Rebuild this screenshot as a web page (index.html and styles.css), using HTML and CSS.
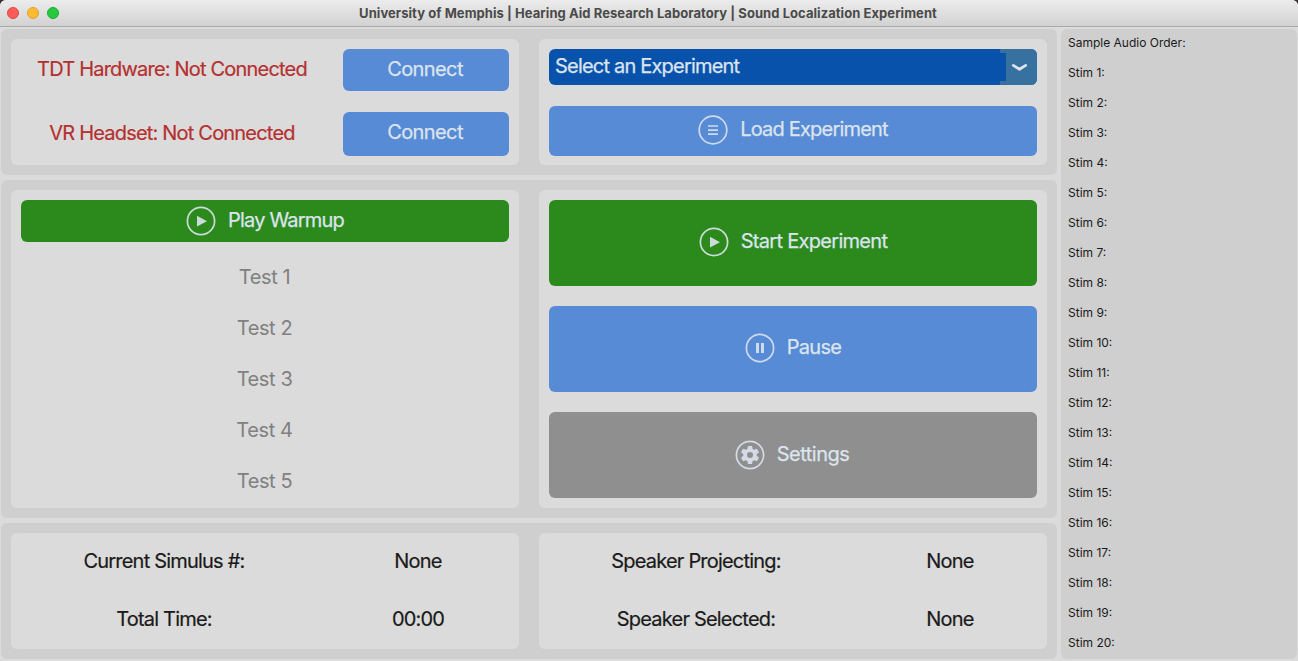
FILE: index.html
```html
<!DOCTYPE html>
<html lang="en">
<head>
<meta charset="utf-8">
<title>Sound Localization Experiment</title>
<link rel="stylesheet" href="styles.css">
</head>
<body>
<div class="window">
  <header class="titlebar">
    <div class="lights"><span class="light red"></span><span class="light yellow"></span><span class="light green"></span></div>
    <h1 class="title"><span>University of Memphis | Hearing Aid Research Laboratory | Sound Localization Experiment</span></h1>
  </header>
  <div class="content">
    <main class="main">
      <section class="section setup">
        <div class="panel connections">
          <span class="status">TDT Hardware: Not Connected</span>
          <button class="btn blue connect">Connect</button>
          <span class="status vr">VR Headset: Not Connected</span>
          <button class="btn blue connect second">Connect</button>
        </div>
        <div class="panel loader">
          <div class="select"><span class="select-text">Select an Experiment</span>
            <svg class="arrow" width="37" height="36" viewBox="0 0 37 36"><path d="M0 0H37V36H0V32H6V4H0Z" fill="#36719f"/><path d="M13.3 16.4L19.5 20.3L25.7 16.4" fill="none" stroke="#dce4ee" stroke-width="2.8" stroke-linecap="round" stroke-linejoin="round"/></svg>
          </div>
          <button class="btn blue load">
            <svg class="icon" viewBox="0 0 30 30"><circle cx="15" cy="15" r="13.8"/><path d="M10 11H20M10 15.1H20M10 19.2H20"/></svg>
            <span>Load Experiment</span>
          </button>
        </div>
      </section>
      <section class="section run">
        <div class="panel tests">
          <button class="btn green warmup">
            <svg class="icon" viewBox="0 0 30 30"><circle cx="15" cy="15" r="13.6"/><path class="solid" d="M11 9.8L21 15.2L11 20.6Z"/></svg>
            <span>Play Warmup</span>
          </button>
          <div class="test-list">
            <span>Test 1</span><span>Test 2</span><span>Test 3</span><span>Test 4</span><span>Test 5</span>
          </div>
        </div>
        <div class="panel controls">
          <button class="btn green start">
            <svg class="icon" viewBox="0 0 30 30"><circle cx="15" cy="15" r="13.6"/><path class="solid" d="M11 9.8L21 15.2L11 20.6Z"/></svg>
            <span>Start Experiment</span>
          </button>
          <button class="btn blue pause">
            <svg class="icon" viewBox="0 0 30 30"><circle cx="15" cy="15" r="13.6"/><path class="solid" d="M11 10H14V20H11ZM16 10H19V20H16Z"/></svg>
            <span>Pause</span>
          </button>
          <button class="btn gray settings">
            <svg class="icon" viewBox="0 0 30 30"><circle cx="15" cy="15" r="13.6"/><path class="solid" fill-rule="evenodd" d="M12.9 6H17.1L17.6 8.9L19.1 9.8L21.9 8.7L24 12.3L21.7 14.2V15.8L24 17.7L21.9 21.3L19.1 20.2L17.6 21.1L17.1 24H12.9L12.4 21.1L10.9 20.2L8.1 21.3L6 17.7L8.3 15.8V14.2L6 12.3L8.1 8.7L10.9 9.8L12.4 8.9ZM15 12A3 3 0 1 0 15 18A3 3 0 1 0 15 12Z"/></svg>
            <span>Settings</span>
          </button>
        </div>
      </section>
      <section class="section info">
        <div class="panel readout left">
          <span>Current Simulus #:</span><span>None</span>
          <span>Total Time:</span><span>00:00</span>
        </div>
        <div class="panel readout right">
          <span>Speaker Projecting:</span><span>None</span>
          <span>Speaker Selected:</span><span>None</span>
        </div>
      </section>
    </main>
    <aside class="sidebar">
      <span>Sample Audio Order:</span>
      <span>Stim 1:</span><span>Stim 2:</span><span>Stim 3:</span><span>Stim 4:</span><span>Stim 5:</span>
      <span>Stim 6:</span><span>Stim 7:</span><span>Stim 8:</span><span>Stim 9:</span><span>Stim 10:</span>
      <span>Stim 11:</span><span>Stim 12:</span><span>Stim 13:</span><span>Stim 14:</span><span>Stim 15:</span>
      <span>Stim 16:</span><span>Stim 17:</span><span>Stim 18:</span><span>Stim 19:</span><span>Stim 20:</span>
    </aside>
  </div>
</div>
</body>
</html>
```
FILE: styles.css
```css
* { box-sizing: border-box; }
body {
  margin: 0;
  background: #3a3032;
  font-family: Inter, "Liberation Sans", sans-serif;
  font-size: 20px;
  letter-spacing: -0.8px;
  color: #1a1a1a;
}
.window {
  width: 1298px;
  height: 661px;
  overflow: hidden;
  background: #dbdbdb;
  border-radius: 6px 6px 0 0;
}
.titlebar {
  display: flex;
  align-items: center;
  height: 27px;
  padding: 0 7px 1px;
  background: linear-gradient(#ececec, #d2d2d2);
  border-bottom: 1px solid #a9a9a9;
}
.lights { display: flex; gap: 8px; width: 60px; }
.light { width: 12px; height: 12px; border-radius: 50%; border: 1px solid; }
.red { background: #fc5b57; border-color: #df4744; }
.yellow { background: #fdbc2e; border-color: #dea034; }
.green.light { background: #28c840; border-color: #1dac2c; }
.title {
  flex: 1;
  margin: 0 62px 0 0;
  text-align: center;
  font-size: 13px;
  font-weight: 700;
  letter-spacing: 0.06px;
  color: #4a4a4a;
  white-space: nowrap;
}
.content { display: flex; gap: 4px; padding: 2px 1px; height: 634px; }
.main { width: 1056px; display: grid; grid-template-rows: 146px 338px 136px; gap: 5px; }
.section {
  display: grid;
  grid-template-columns: 508px 508px;
  grid-template-rows: 100%;
  gap: 20px;
  padding: 10px;
  background: #cfcfcf;
  border-radius: 6px;
}
.panel { background: #dbdbdb; border-radius: 6px; padding: 10px; }
.connections {
  display: grid;
  grid-template-columns: 302px 166px;
  grid-template-rows: 42px 44px;
  column-gap: 20px;
  row-gap: 21px;
  align-items: center;
  text-align: center;
  padding-bottom: 9px;
}
.status { color: #b5302f; padding-bottom: 3px; -webkit-text-stroke: .2px; }
.btn {
  display: flex;
  align-items: center;
  justify-content: center;
  gap: 12px;
  width: 100%;
  margin: 0;
  padding: 0 0 2px;
  border: 0;
  border-radius: 6px;
  font: inherit;
  letter-spacing: inherit;
  color: #dce4ee;
  white-space: nowrap;
  -webkit-text-stroke: .25px;
}
.blue { background: #578bd5; }
.green { background: #2b8a1b; }
.gray { background: #8f8f8f; }
.connect { height: 42px; padding-right: 2px; letter-spacing: -0.6px; }
.second { height: 44px; padding-bottom: 4px; }
.loader { display: flex; flex-direction: column; gap: 21px; padding-bottom: 9px; }
.select {
  display: flex;
  justify-content: space-between;
  height: 36px;
  padding-left: 6px;
  overflow: hidden;
  border-radius: 6px;
  background: #0952ab;
  color: #dce4ee;
  -webkit-text-stroke: .25px;
}
.select-text { line-height: 34px; }
.load { height: 50px; padding-bottom: 5px; }
.icon {
  width: 30px;
  height: 30px;
  margin-top: 2px;
  flex: none;
  fill: none;
  stroke: #dce4ee;
  stroke-width: 1.7;
  opacity: .9;
}
.solid { fill: #dce4ee; stroke: none; }
.warmup { height: 42px; padding-bottom: 3px; }
.tests { padding-bottom: 0; }
.test-list {
  display: grid;
  grid-template-rows: repeat(5, 51.2px);
  align-items: center;
  padding: 9px 1px 0 0;
  text-align: center;
  letter-spacing: -0.4px;
  color: #808080;
}
.controls { display: grid; grid-template-rows: repeat(3, 86px); gap: 20px; }
.controls .btn { padding-bottom: 4px; letter-spacing: -0.7px; }
.controls .settings { padding: 0 2px 2px 0; letter-spacing: -0.5px; }
.readout {
  display: grid;
  grid-template-rows: 58px 58px;
  padding: 0 10px;
  column-gap: 20px;
  align-items: center;
  text-align: center;
  -webkit-text-stroke: .2px;
}
.left { grid-template-columns: 286px 182px; }
.right { grid-template-columns: 294px 174px; }
.readout span { padding-bottom: 2px; }
.sidebar {
  width: 236px;
  height: 630px;
  padding-left: 7px;
  border-radius: 6px;
  background: #cfcfcf;
  font-size: 12px;
  letter-spacing: 0;
}
.sidebar span { display: block; height: 30px; line-height: 28px; }
```
